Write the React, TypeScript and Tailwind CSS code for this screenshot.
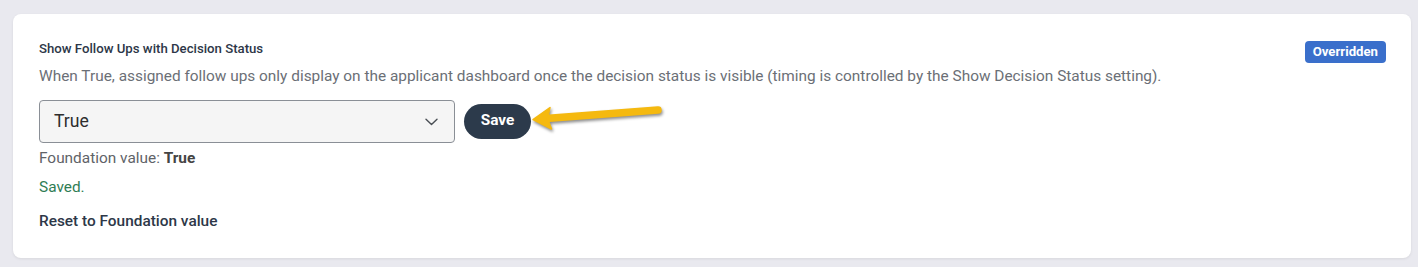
export default function App() {
  return (
    <div className="h-[267px] w-full bg-[#e9e9ef] pl-[13px] pr-[7px] pt-[14px] font-['Roboto',sans-serif]">
      <div className="relative h-[244px] rounded-lg bg-white px-[26px] pt-[26px] shadow-[0_1px_3px_rgba(0,0,0,0.08)]">
        <div className="flex items-start justify-between">
          <div className="text-[13.2px] font-medium leading-[18px] text-[#2d3748]">Show Follow Ups with Decision Status</div>
          <span className="mt-[1px] mr-[-1px] flex h-[22px] items-center rounded-[4px] bg-[#3a6fcb] px-[8px] text-[13.2px] font-bold text-white">
            Overridden
          </span>
        </div>
        <p className="mt-[3px] text-[15.4px] leading-5 text-[#6b6f76]">
          When True, assigned follow ups only display on the applicant dashboard once the decision status is visible (timing is controlled by the Show Decision Status setting).
        </p>
        <div className="mt-[14px] flex items-center gap-[9px]">
          <div className="flex h-[43px] w-[416px] items-center justify-between rounded-[4px] border border-[#8a8f96] bg-[#f5f5f5] pl-[14px] pr-[16px]">
            <span className="text-[17.6px] text-[#2d2d2d]">True</span>
            <svg width="13" height="8" viewBox="0 0 13 8" fill="none">
              <path d="M1 1.2l5.5 5.3L12 1.2" stroke="#4a4f55" strokeWidth="1.4" strokeLinecap="round" strokeLinejoin="round" />
            </svg>
          </div>
          <button className="h-[35px] w-[67px] rounded-full bg-[#2c3a4b] pb-[2px] text-[15.4px] font-bold text-white">Save</button>
        </div>
        <div className="mt-[5px] text-[15.4px] leading-5 text-[#5f6368]">
          Foundation value: <span className="font-bold text-[#444]">True</span>
        </div>
        <div className="mt-[9px] text-[15.4px] leading-5 text-[#2f7d55]">Saved.</div>
        <div className="mt-[14px] text-[15.4px] font-medium leading-5 text-[#2d3748]">Reset to Foundation value</div>

        <svg
          className="absolute left-[517px] top-[84px] drop-shadow-[1px_2px_1.5px_rgba(0,0,0,0.45)]"
          width="140"
          height="36"
          viewBox="0 0 140 36"
          fill="none"
        >
          <path d="M16 20.5 L128 12" stroke="#f5b90f" strokeWidth="7.5" strokeLinecap="round" />
          <path d="M3 21.5 L20 9.5 L17.5 20.5 L21.5 31 Z" fill="#f5b90f" stroke="#f5b90f" strokeWidth="1.5" strokeLinejoin="round" />
        </svg>
      </div>
    </div>
  );
}
